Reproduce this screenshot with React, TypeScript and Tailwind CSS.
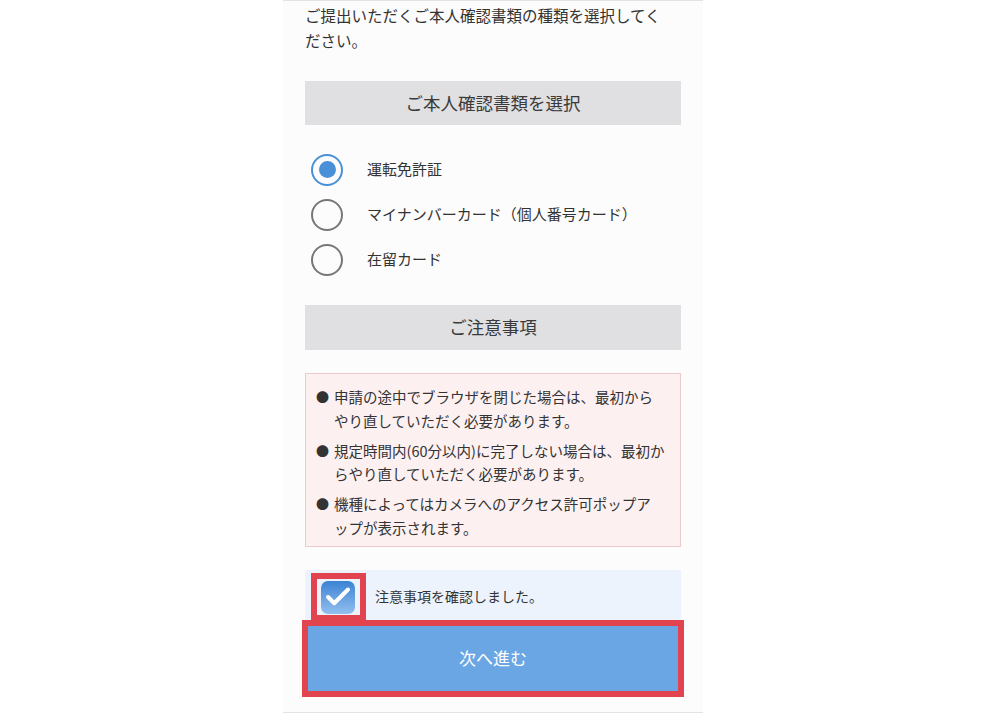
import { Check } from "lucide-react";

const font = { fontFamily: '"Noto Sans CJK JP", "Noto Sans", sans-serif' };

export default function App() {
  const docs = [
    { id: "license", label: "運転免許証", checked: true },
    { id: "mynumber", label: "マイナンバーカード（個人番号カード）", checked: false },
    { id: "residence", label: "在留カード", checked: false },
  ];

  const notes = [
    ["申請の途中でブラウザを閉じた場合は、最初から", "やり直していただく必要があります。"],
    ["規定時間内(60分以内)に完了しない場合は、最初か", "らやり直していただく必要があります。"],
    ["機種によってはカメラへのアクセス許可ポップア", "ップが表示されます。"],
  ];

  return (
    <div className="min-h-screen bg-white text-[#333]" style={font}>
      <div className="ml-[283px] w-[420px] h-[713px] flex flex-col border-t border-b border-[#e3e3e3] bg-[#fcfcfc] px-[22px]">
        <p className="mt-[2px] text-[15.5px] leading-[25px] text-[#333]">
          ご提出いただくご本人確認書類の種類を選択してく
          <br />
          ださい。
        </p>

        <div className="mt-[28px] h-[44px] flex items-center justify-center bg-[#e0dfe2] text-[17.5px] text-[#3a3a3a]">
          ご本人確認書類を選択
        </div>

        <div className="mt-[22px] flex flex-col">
          {docs.map((d) => (
            <div key={d.id} className="h-[45px] flex items-center">
              <div className="ml-[6px] w-[32px] h-[32px] rounded-full flex items-center justify-center">
                {d.checked ? (
                  <div className="w-[32px] h-[32px] rounded-full border-[2.5px] border-[#4a90d9] flex items-center justify-center">
                    <div className="w-[17px] h-[17px] rounded-full bg-[#4a90d9]" />
                  </div>
                ) : (
                  <div className="w-[32px] h-[32px] rounded-full border-2 border-[#777]" />
                )}
              </div>
              <span className="ml-[24px] text-[15px] text-[#333]">{d.label}</span>
            </div>
          ))}
        </div>

        <div className="mt-[23px] h-[45px] flex items-center justify-center bg-[#e0dfe2] text-[17.5px] text-[#3a3a3a]">
          ご注意事項
        </div>

        <div className="mt-[23px] border border-[#ebc9cc] bg-[#fcf0f1] pl-[10px] pt-[11px] pb-[7px] text-[14.5px] leading-[23.5px] text-[#333]">
          {notes.map((n, i) => (
            <div key={i} className={"flex " + (i > 0 ? "mt-[6.5px]" : "")}>
              <span className="w-[18px] shrink-0 text-[13px]">●</span>
              <div className="whitespace-nowrap">
                {n[0]}
                <br />
                {n[1]}
              </div>
            </div>
          ))}
        </div>

        <div className="relative mt-[23px] h-[52px] flex items-center bg-[#edf3fc]">
          <div className="ml-[16px] mt-[2px] w-[34px] h-[33px] rounded-[7px] bg-gradient-to-b from-[#3b82d4] to-[#92bfee] flex items-center justify-center">
            <Check className="w-[30px] h-[30px] text-white" strokeWidth={3.2} />
          </div>
          <span className="ml-[20px] text-[14px] text-[#333]">注意事項を確認しました。</span>
          <div className="absolute left-[6px] top-[3px] w-[55px] h-[48px] border-[6px] border-[#e1444f] z-10" />
        </div>

        <div className="relative">
          <button className="w-full h-[72px] bg-[#6aa6e4] text-white text-[17px] flex items-center justify-center">
            次へ進む
          </button>
          <div className="absolute -left-[3px] -right-[3px] -top-[2px] -bottom-[3px] border-[6px] border-[#e1444f]" />
        </div>
      </div>
    </div>
  );
}
